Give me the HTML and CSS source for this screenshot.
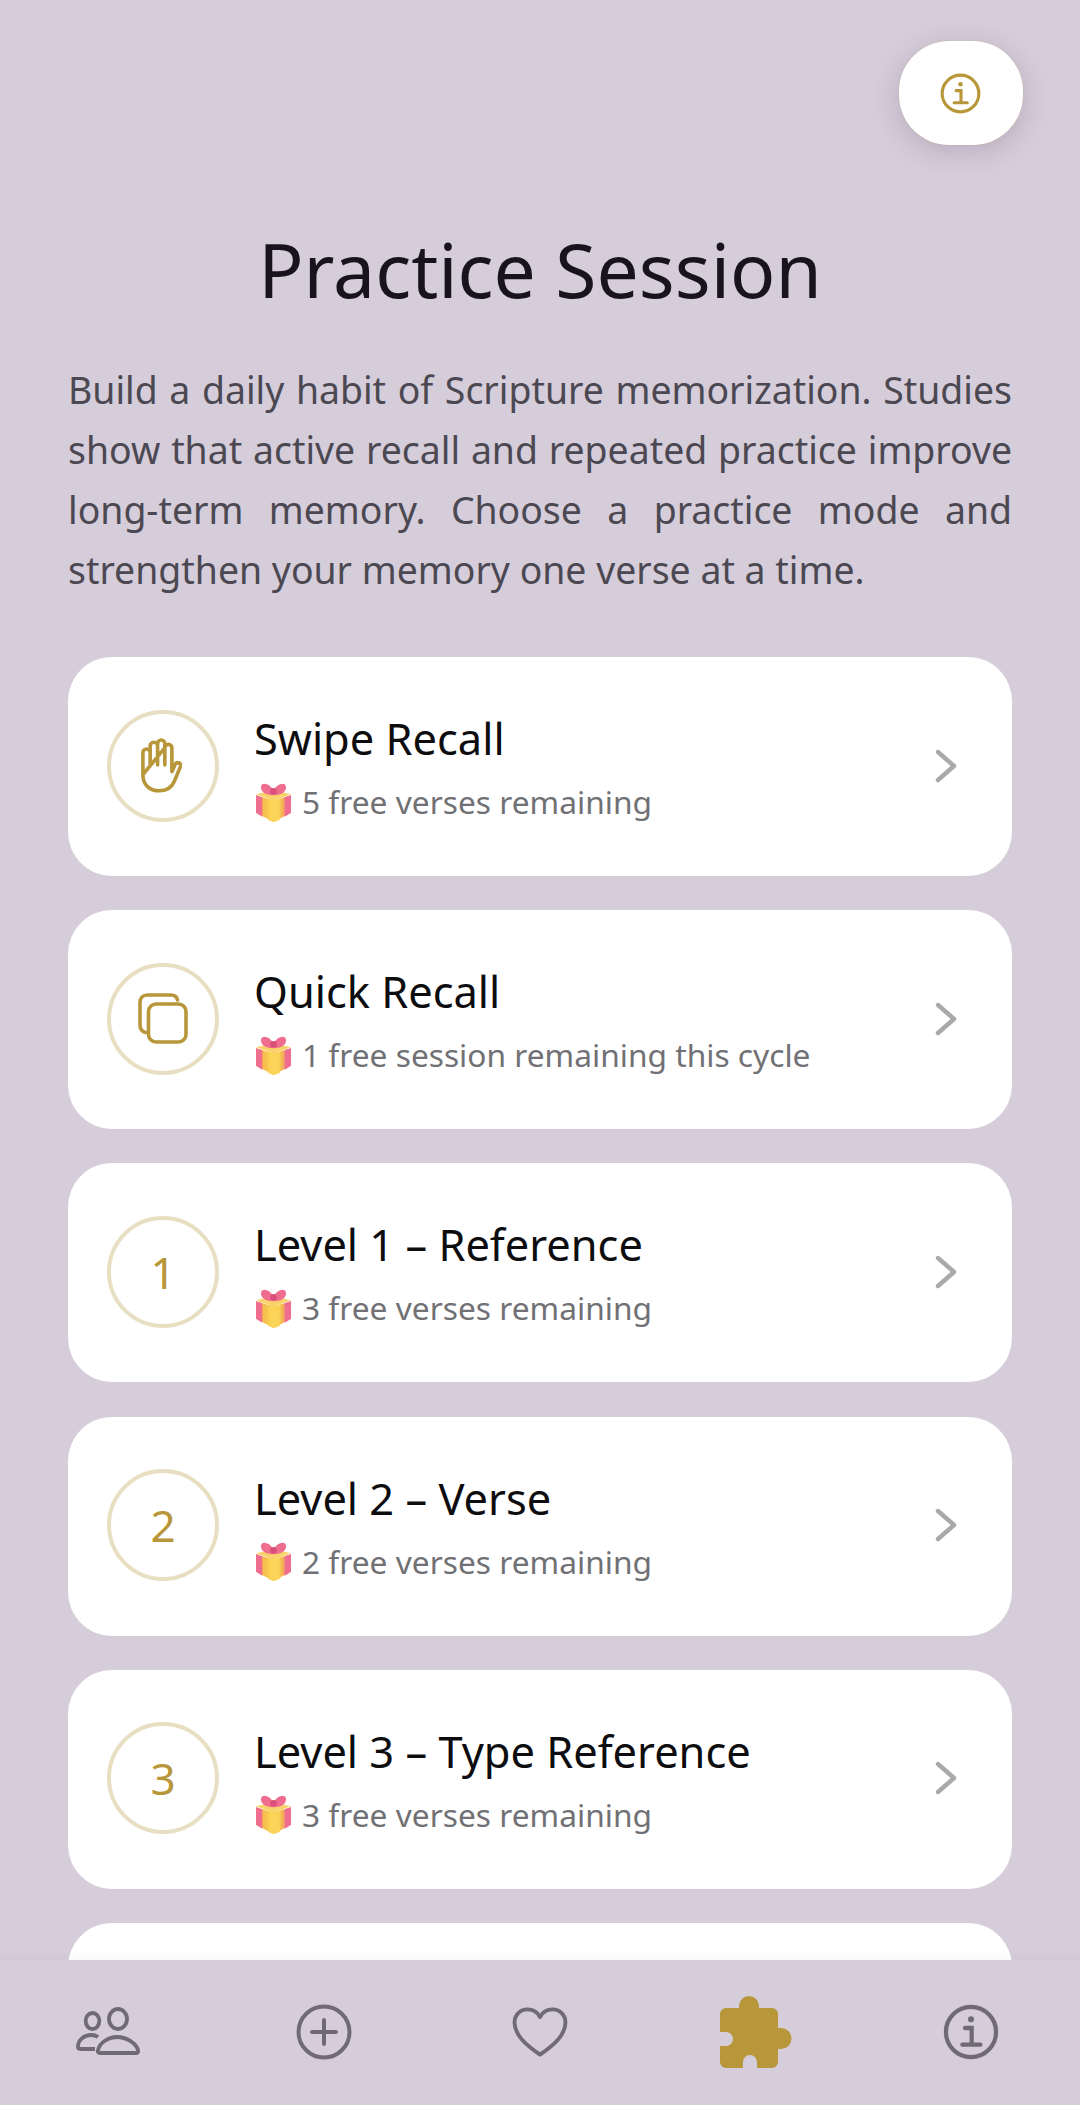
FILE: index.html
```html
<!DOCTYPE html>
<html lang="en">
<head>
<meta charset="utf-8">
<title>Practice Session</title>
<link rel="stylesheet" href="styles.css">
</head>
<body>
<svg class="defs" width="0" height="0" aria-hidden="true">
  <defs>
    <linearGradient id="giftbox" x1="0" y1="0" x2="1" y2="0">
      <stop offset="0" stop-color="#f7a24d"/><stop offset="0.3" stop-color="#f6c44f"/><stop offset="0.7" stop-color="#f6c44f"/><stop offset="1" stop-color="#ec5f86"/>
    </linearGradient>
    <symbol id="gift" viewBox="0 0 36 38">
      <path d="M1 12 18 17 35 12V29L18 38 1 29Z" fill="url(#giftbox)"/>
      <path d="M1 11 18 7 35 11 18 17Z" fill="#f9d36a"/>
      <path d="M1 12 7 14V33L1 29ZM29 14 35 12V29L29 33Z" fill="#ef6d8f"/>
      <path d="M18 17 24 15V36L18 38 13 36V15Z" fill="#fbd356"/>
      <path d="M18 7C14 0 7-1 6 3c-1 4 2 9 12 9 10 0 13-5 12-9-1-4-8-3-12 4Z" fill="#ef6d8f"/>
      <circle cx="18" cy="8" r="3.2" fill="#d94f78"/>
    </symbol>
    <symbol id="chev" viewBox="0 0 24 36">
      <path d="M4 4 20 18 4 32" fill="none" stroke="currentColor" stroke-width="4.4" stroke-linecap="round" stroke-linejoin="round"/>
    </symbol>
    <symbol id="info" viewBox="0 0 42 42">
      <circle cx="21" cy="21" r="18.8" fill="none" stroke="currentColor" stroke-width="3.2"/>
      <circle cx="21" cy="11.5" r="2.3" fill="currentColor"/>
      <path d="M16.5 18H21.5V30M14.5 30.5H28" fill="none" stroke="currentColor" stroke-width="3.2" stroke-linecap="round"/>
    </symbol>
  </defs>
</svg>

<main class="page">
  <button class="info-btn" aria-label="Info"><svg class="info-btn-icon"><use href="#info"/></svg></button>
  <h1 class="title">Practice Session</h1>
  <p class="intro">Build a daily habit of Scripture memorization. Studies show that active recall and repeated practice improve long-term memory. Choose a practice mode and strengthen your memory one verse at a time.</p>

  <div class="list">
    <div class="card">
      <div class="badge">
        <svg class="hand" viewBox="0 0 43 57" fill="none" stroke="currentColor" stroke-width="3.8" stroke-linecap="round" stroke-linejoin="round">
          <path d="M2 38V15a3.8 3.8 0 0 1 7.6 0V28M9.6 15V8a3.9 3.9 0 0 1 7.8 0V28M17.4 7V5.500a3.800 3.800 0 0 1 7.600 0V28M25 10a3.700 3.700 0 0 1 7.400 0V35L36 27a3 3 0 0 1 5.400 2.500L35 45C32 52 26 55 19 55 9 55 2 49 2 38Z"/>
        </svg>
      </div>
      <div class="text">
        <div class="name">Swipe Recall</div>
        <div class="sub"><svg class="gift"><use href="#gift"/></svg><span>5 free verses remaining</span></div>
      </div>
      <svg class="chevron"><use href="#chev"/></svg>
    </div>

    <div class="card">
      <div class="badge">
        <svg class="cards" viewBox="0 0 50 51" fill="none" stroke="currentColor" stroke-width="3.6" stroke-linecap="round" stroke-linejoin="round">
          <path d="M39.500 7C38.800 3.800 36.500 2 33 2H9.500C5 2 2 5 2 9.500V32C2 36 4 38.500 7.500 39.500"/>
          <rect x="10.500" y="11" width="37.500" height="38" rx="7.500"/>
        </svg>
      </div>
      <div class="text">
        <div class="name">Quick Recall</div>
        <div class="sub"><svg class="gift"><use href="#gift"/></svg><span>1 free session remaining this cycle</span></div>
      </div>
      <svg class="chevron"><use href="#chev"/></svg>
    </div>

    <div class="card">
      <div class="badge">1</div>
      <div class="text">
        <div class="name">Level 1 – Reference</div>
        <div class="sub"><svg class="gift"><use href="#gift"/></svg><span>3 free verses remaining</span></div>
      </div>
      <svg class="chevron"><use href="#chev"/></svg>
    </div>

    <div class="card">
      <div class="badge">2</div>
      <div class="text">
        <div class="name">Level 2 – Verse</div>
        <div class="sub"><svg class="gift"><use href="#gift"/></svg><span>2 free verses remaining</span></div>
      </div>
      <svg class="chevron"><use href="#chev"/></svg>
    </div>

    <div class="card">
      <div class="badge">3</div>
      <div class="text">
        <div class="name">Level 3 – Type Reference</div>
        <div class="sub"><svg class="gift"><use href="#gift"/></svg><span>3 free verses remaining</span></div>
      </div>
      <svg class="chevron"><use href="#chev"/></svg>
    </div>

    <div class="card"></div>
  </div>
</main>

<nav class="nav">
  <div class="nav-item">
    <svg class="nav-people" viewBox="0 0 64 48" fill="none" stroke="currentColor" stroke-width="3.800" stroke-linejoin="round">
      <ellipse cx="16.500" cy="14" rx="6.800" ry="8"/>
      <ellipse cx="42" cy="12" rx="9" ry="10"/>
      <path d="M22 30C20 28.500 18 28 15 28 8 28 2 33 2 39.500 2 41 3 42 4.500 42H19"/>
      <path d="M45 46H24C22 46 21.500 44.500 22 43 24 35 33 30 41 30 50 30 60 36 62 43 62.500 45 61.500 46 60 46Z"/>
    </svg>
  </div>
  <div class="nav-item">
    <svg class="nav-icon" viewBox="0 0 56 56" fill="none" stroke="currentColor" stroke-width="4" stroke-linecap="round">
      <circle cx="28" cy="28" r="25.500"/>
      <path d="M28 16V40M16 28H40"/>
    </svg>
  </div>
  <div class="nav-item">
    <svg class="nav-heart" viewBox="0 0 58 52" fill="none" stroke="currentColor" stroke-width="4" stroke-linejoin="round">
      <path d="M29 49.500C14 39 2.500 29 2.500 16 2.500 8 8.500 2.500 16 2.500 21.500 2.500 26.500 5.500 29 10.500 31.500 5.500 36.500 2.500 42 2.500 49.500 2.500 55.500 8 55.500 16 55.500 29 44 39 29 49.500Z"/>
    </svg>
  </div>
  <div class="nav-item">
    <svg class="nav-puzzle" viewBox="0 0 72 73" fill="currentColor">
      <path d="M6 12H19V10A10 10 0 0 1 39 10V12H52A6 6 0 0 1 58 18V32H61A10.500 10.500 0 0 1 61 53H58V66A6 6 0 0 1 52 72H37V66A7 7 0 0 0 23 66V72H6A6 6 0 0 1 0 66V50H6A7 7 0 0 0 6 36H0V18A6 6 0 0 1 6 12Z"/>
    </svg>
  </div>
  <div class="nav-item nav-item-info">
    <svg class="nav-icon"><use href="#info"/></svg>
  </div>
</nav>
</body>
</html>
```
FILE: styles.css
```css
* { box-sizing: border-box; }
html, body { margin: 0; height: 100%; }
body {
  width: 1080px;
  height: 2105px;
  overflow: hidden;
  display: flex;
  flex-direction: column;
  background: #d5cdda;
  font-family: "Noto Sans", "Open Sans", sans-serif;
}
.defs { position: absolute; }
.page {
  position: relative;
  flex: 1;
  min-height: 0;
  overflow: hidden;
  padding: 223px 68px 0 68px;
}
.info-btn {
  position: absolute;
  left: 899px;
  top: 41px;
  width: 124px;
  height: 104px;
  border: 0;
  padding: 0;
  border-radius: 50px;
  background: #ffffff;
  box-shadow: 0 0 1px rgba(184, 150, 58, 0.5), 0 6px 26px rgba(80, 60, 90, 0.22);
  color: #b8963a;
  display: flex;
  align-items: center;
  justify-content: center;
}
.info-btn-icon { width: 41px; height: 41px; margin-left: -2px; }
.title {
  margin: 0;
  font-size: 75px;
  line-height: 92px;
  font-weight: 400;
  text-align: center;
  color: #17141c;
}
.intro {
  margin: 45px 0 0;
  font-size: 37.400px;
  line-height: 60px;
  color: #4c4852;
  text-align: justify;
}
.list {
  margin-top: 57px;
  display: flex;
  flex-direction: column;
  gap: 34.200px;
}
.card {
  flex: none;
  height: 219px;
  background: #fff;
  border-radius: 44px;
  padding: 0 54px 2px 39px;
  display: flex;
  align-items: center;
}
.badge {
  flex: none;
  width: 112px;
  height: 112px;
  border-radius: 50%;
  border: 4px solid #e8dfc2;
  color: #b8963a;
  display: flex;
  align-items: center;
  justify-content: center;
  font-size: 44px;
  font-weight: 400;
}
.hand { width: 41px; height: 55px; margin-left: -3px; }
.cards { width: 50px; height: 51px; }
.text { flex: 1; margin-left: 35px; min-width: 0; padding-top: 4px; }
.name { font-size: 43.400px; line-height: 56px; color: #0d0d0f; }
.sub {
  margin-top: 13px;
  padding-left: 1px;
  display: flex;
  align-items: center;
  gap: 10px;
  font-size: 31.700px;
  line-height: 44px;
  color: #717175;
}
.gift { flex: none; width: 37px; height: 39px; }
.chevron { flex: none; width: 24px; height: 36px; color: #a9a9ab; }
.nav {
  flex: none;
  height: 145px;
  display: grid;
  grid-template-columns: repeat(5, 1fr);
  background: #d5cdda;
  color: #706a74;
  box-shadow: 0 -3px 6px rgba(100, 85, 110, 0.04);
  position: relative;
}
.nav-item {
  display: flex;
  align-items: flex-start;
  justify-content: center;
  padding-top: 44px;
}
.nav-item-info { padding-right: 3px; }
.nav-icon { width: 56px; height: 56px; }
.nav-people { width: 64px; height: 48px; margin-top: 3px; }
.nav-heart { width: 56px; height: 50px; margin-top: 3px; }
.nav-puzzle { width: 72px; height: 73px; margin-top: -8px; color: #b8963a; }
```
